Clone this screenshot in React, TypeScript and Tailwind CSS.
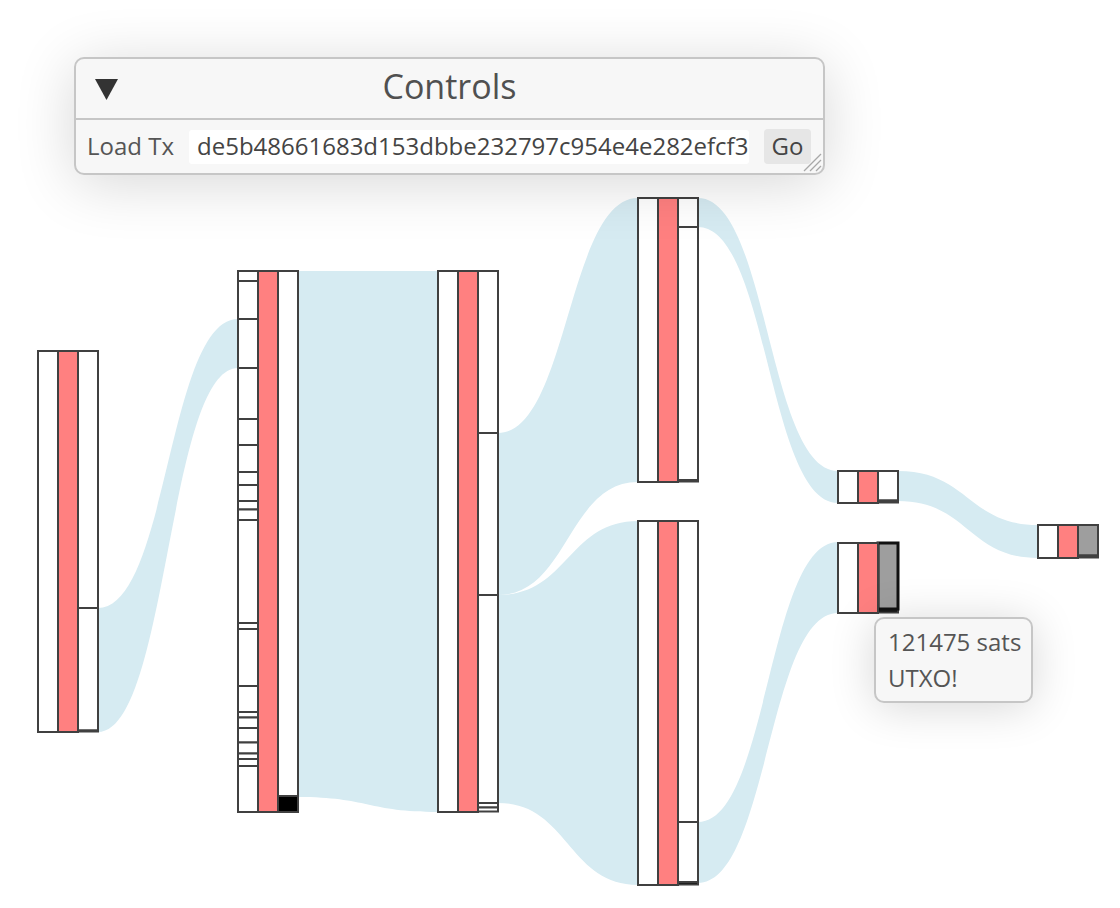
import React from "react";

const STROKE = "#404040";
const FLOW = "#d6ebf2";
const RED = "#ff8080";

type Seg = { y0: number; y1: number; fill?: string; stroke?: string; sw?: number };

function segsFrom(bounds: number[]): Seg[] {
  const out: Seg[] = [];
  for (let i = 0; i < bounds.length - 1; i++) out.push({ y0: bounds[i], y1: bounds[i + 1] });
  return out;
}

function Col({ x, segs }: { x: number; segs: Seg[] }) {
  return (
    <g>
      {segs.map((s, i) => (
        <rect
          key={i}
          x={x}
          y={s.y0}
          width={20}
          height={Math.max(s.y1 - s.y0, 0.5)}
          fill={s.fill ?? "#ffffff"}
          stroke={s.stroke ?? STROKE}
          strokeWidth={s.sw ?? 2}
        />
      ))}
    </g>
  );
}

function SNode({
  x,
  y0,
  y1,
  left,
  right,
}: {
  x: number;
  y0: number;
  y1: number;
  left?: Seg[];
  right: Seg[];
}) {
  return (
    <g>
      <Col x={x} segs={left ?? [{ y0, y1 }]} />
      <Col x={x + 40} segs={right} />
      <Col x={x + 20} segs={[{ y0, y1, fill: RED }]} />
    </g>
  );
}

function flowPath(x0: number, a0: number, a1: number, x1: number, b0: number, b1: number) {
  const xm = (x0 + x1) / 2;
  return `M${x0},${a0} C${xm},${a0} ${xm},${b0} ${x1},${b0} L${x1},${b1} C${xm},${b1} ${xm},${a1} ${x0},${a1} Z`;
}

const flows: [number, number, number, number, number, number][] = [
  [98, 608, 732, 238, 319, 368],
  [298, 271, 797, 438, 271, 812],
  [498, 433, 595, 638, 198, 482],
  [498, 595, 803, 638, 521, 885],
  [698, 198, 227, 838, 471, 503],
  [698, 822, 883, 838, 542, 613],
  [898, 471, 501, 1038, 525, 558],
];

function Sankey() {
  const node2Left = segsFrom([
    271, 281, 319, 368, 419, 445, 472, 485, 501, 509.5, 520, 623, 629, 686, 712, 717.5, 728, 742.5, 753.5, 759,
    766, 812,
  ]);
  return (
    <svg className="absolute left-0 top-0" width={1120} height={908} viewBox="0 0 1120 908">
      {flows.map((f, i) => (
        <path key={i} d={flowPath(...f)} fill={FLOW} />
      ))}
      <SNode
        x={38}
        y0={351}
        y1={732}
        right={[
          { y0: 351, y1: 608 },
          { y0: 608, y1: 730.5 },
          { y0: 730.5, y1: 731.5, fill: "#000" },
        ]}
      />
      <SNode
        x={238}
        y0={271}
        y1={812}
        left={node2Left}
        right={[
          { y0: 271, y1: 796 },
          { y0: 796, y1: 812, fill: "#000" },
        ]}
      />
      <SNode
        x={438}
        y0={271}
        y1={812}
        right={[
          { y0: 271, y1: 433 },
          { y0: 433, y1: 595 },
          { y0: 595, y1: 803 },
          { y0: 803, y1: 807.5 },
          { y0: 807.5, y1: 811.5 },
        ]}
      />
      <SNode
        x={638}
        y0={198}
        y1={482}
        right={[
          { y0: 198, y1: 227 },
          { y0: 227, y1: 480 },
          { y0: 480, y1: 481.5, fill: "#000" },
        ]}
      />
      <SNode
        x={638}
        y0={521}
        y1={885}
        right={[
          { y0: 521, y1: 822 },
          { y0: 822, y1: 882 },
          { y0: 882, y1: 884.5, fill: "#000" },
        ]}
      />
      <SNode
        x={838}
        y0={471}
        y1={503}
        right={[
          { y0: 471, y1: 500.5 },
          { y0: 500.5, y1: 502.5, fill: "#000" },
        ]}
      />
      <SNode
        x={838}
        y0={543}
        y1={613}
        right={[
          { y0: 609.5, y1: 612.5, fill: "#000" },
          { y0: 543, y1: 609, fill: "#9e9e9e", stroke: "#111", sw: 3 },
        ]}
      />
      <SNode
        x={1038}
        y0={525}
        y1={558}
        right={[
          { y0: 525, y1: 555.5, fill: "#9e9e9e" },
          { y0: 555.5, y1: 557.5, fill: "#000" },
        ]}
      />
    </svg>
  );
}

export default function App() {
  const font = { fontFamily: '"Open Sans", "Noto Sans", sans-serif' };
  return (
    <div className="relative w-[1120px] h-[908px] overflow-hidden bg-white" style={font}>
      <Sankey />

      {/* Controls panel */}
      <div className="absolute left-[74px] top-[57px] w-[751px] h-[118px] rounded-[10px] border-2 border-[#c6c6c6] bg-[#f7f7f7] shadow-[0_8px_60px_rgba(0,0,0,0.16)] flex flex-col">
        <div className="grid grid-cols-[1fr_auto_1fr] items-center h-[59px]">
          <div className="pl-[19px] flex items-center pt-[2px]">
            <svg width="23" height="21" viewBox="0 0 23 21">
              <polygon points="0,0 23,0 11.5,21" fill="#333333" />
            </svg>
          </div>
          <div className="text-[34px] leading-none text-[#505050] pb-[6px]">Controls</div>
          <div />
        </div>
        <div className="h-[2px] bg-[#c6c6c6]" />
        <div className="relative flex items-center flex-1 pl-[11px] pr-[10px] gap-[15px]">
          <span className="text-[24px] leading-none text-[#555555] pb-[2px]">Load Tx</span>
          <div className="w-[560px] h-[34px] bg-white rounded-[3px] overflow-hidden flex items-center pl-[8px]">
            <span className="text-[24px] leading-none text-[#444444] whitespace-nowrap pb-[1px]">
              de5b48661683d153dbbe232797c954e4e282efcf3a7b29d51c0e8f4a6b2d91c7
            </span>
          </div>
          <div className="w-[47px] h-[35px] bg-[#e6e6e6] rounded-[4px] flex items-center justify-center text-[24px] leading-none text-[#444444] pb-[1px]">
            Go
          </div>
          <svg className="absolute right-[1px] bottom-[1px]" width="22" height="22" viewBox="0 0 22 22">
            <line x1="4" y1="21" x2="21" y2="4" stroke="#a8a8a8" strokeWidth="1.2" />
            <line x1="10" y1="21" x2="21" y2="10" stroke="#a8a8a8" strokeWidth="1.2" />
            <line x1="16" y1="21" x2="21" y2="16" stroke="#a8a8a8" strokeWidth="1.2" />
          </svg>
        </div>
      </div>

      {/* Tooltip */}
      <div className="absolute left-[874px] top-[617px] w-[159px] h-[86px] rounded-[10px] border-2 border-[#c6c6c6] bg-[#f7f7f7] shadow-[0_4px_45px_rgba(0,0,0,0.16)] pl-[12px] pt-[5px]">
        <div className="text-[24px] leading-[36px] text-[#555555] whitespace-nowrap">121475 sats</div>
        <div className="text-[24px] leading-[36px] text-[#555555] whitespace-nowrap">UTXO!</div>
      </div>
    </div>
  );
}
